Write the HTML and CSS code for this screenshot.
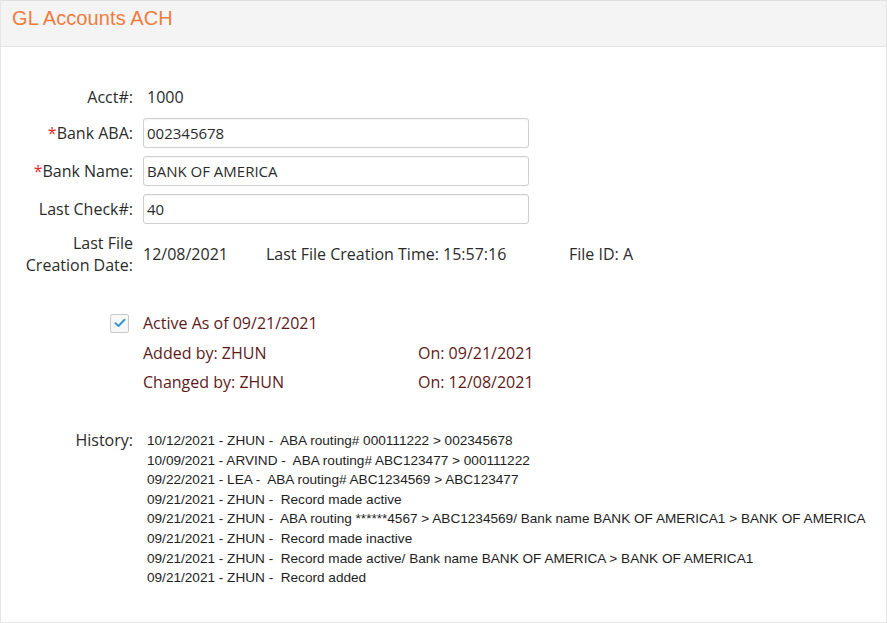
FILE: index.html
```html
<!DOCTYPE html>
<html>
<head>
<meta charset="utf-8">
<link rel="stylesheet" href="styles.css">
</head>
<body>
<div class="panel">
  <div class="panel-head"><h1 class="title">GL Accounts ACH</h1></div>
  <div class="panel-body">
    <div class="form">
      <div class="row row-static">
        <div class="label">Acct#:</div>
        <div class="value">1000</div>
      </div>
      <div class="row">
        <div class="label"><span class="req">*</span>Bank ABA:</div>
        <input class="field" type="text" value="002345678">
      </div>
      <div class="row">
        <div class="label"><span class="req">*</span>Bank Name:</div>
        <input class="field" type="text" value="BANK OF AMERICA">
      </div>
      <div class="row">
        <div class="label">Last Check#:</div>
        <input class="field" type="text" value="40">
      </div>
      <div class="row row-file">
        <div class="label label-2line">Last File<br>Creation Date:</div>
        <div class="file-info">
          <span class="v-date">12/08/2021</span>
          <span class="v-time">Last File Creation Time: 15:57:16</span>
          <span class="v-id">File ID: A</span>
        </div>
      </div>
    </div>

    <div class="status">
      <div class="active-line">
        <span class="checkbox">
          <svg width="12" height="10" viewBox="0 0 12 10"><path d="M1.5 5.2 L4.5 8 L10.5 1.8" fill="none" stroke="#3a98d6" stroke-width="2" stroke-linecap="round" stroke-linejoin="round"/></svg>
        </span>
        <span class="active-text">Active As of 09/21/2021</span>
      </div>
      <div class="audit">
        <span class="who">Added by: ZHUN</span><span class="when">On: 09/21/2021</span>
      </div>
      <div class="audit">
        <span class="who">Changed by: ZHUN</span><span class="when">On: 12/08/2021</span>
      </div>
    </div>

    <div class="history">
      <div class="label history-label">History:</div>
      <div class="history-list">
        <div>10/12/2021 - ZHUN -&nbsp; ABA routing# 000111222 &gt; 002345678</div>
        <div>10/09/2021 - ARVIND -&nbsp; ABA routing# ABC123477 &gt; 000111222</div>
        <div>09/22/2021 - LEA -&nbsp; ABA routing# ABC1234569 &gt; ABC123477</div>
        <div>09/21/2021 - ZHUN -&nbsp; Record made active</div>
        <div>09/21/2021 - ZHUN -&nbsp; ABA routing ******4567 &gt; ABC1234569/ Bank name BANK OF AMERICA1 &gt; BANK OF AMERICA</div>
        <div>09/21/2021 - ZHUN -&nbsp; Record made inactive</div>
        <div>09/21/2021 - ZHUN -&nbsp; Record made active/ Bank name BANK OF AMERICA &gt; BANK OF AMERICA1</div>
        <div>09/21/2021 - ZHUN -&nbsp; Record added</div>
      </div>
    </div>
  </div>
</div>
</body>
</html>
```
FILE: styles.css
```css
html, body {
  margin: 0;
  padding: 0;
  background: #ffffff;
}
body {
  font-family: "Open Sans", "Liberation Sans", sans-serif;
  color: #2b2b2b;
  font-size: 16px;
}
.panel {
  box-sizing: border-box;
  width: 887px;
  height: 623px;
  border: 1px solid #e6e6e6;
  border-top-color: #e0e0e0;
}
.panel-head {
  background: #f4f4f4;
  height: 45px;
  border-bottom: 1px solid #e3e3e3;
  display: flex;
  align-items: flex-start;
  padding-left: 11px;
}
.title {
  margin: 0;
  padding-top: 6px;
  font-family: "Liberation Sans", Arial, sans-serif;
  font-weight: normal;
  font-size: 20px;
  color: #f07b3f;
  letter-spacing: 0.1px;
}
.panel-body {
  padding-top: 37px;
}
.form {
  display: flex;
  flex-direction: column;
  gap: 8px;
}
.row {
  display: grid;
  grid-template-columns: 132px 386px;
  column-gap: 10px;
  align-items: center;
  height: 30px;
}
.row-static {
  height: 26px;
}
.row-file {
  height: 44px;
}
.label {
  text-align: right;
  color: #2b2b2b;
  white-space: nowrap;
}
.label-2line {
  line-height: 22px;
}
.req {
  color: #e8262a;
}
.value {
  padding-left: 4px;
}
.field {
  box-sizing: border-box;
  height: 30px;
  width: 386px;
  margin: 0;
  border: 1px solid #cfcfcf;
  border-radius: 3px;
  padding: 0 3px;
  font-family: "Open Sans", "Liberation Sans", sans-serif;
  font-size: 15px;
  color: #2b2b2b;
  background: #ffffff;
  box-shadow: inset 0 1px 1px rgba(0,0,0,0.04);
}
.file-info {
  display: flex;
  white-space: nowrap;
}
.v-date { flex: none; width: 123px; }
.v-time { flex: none; width: 303px; }
.v-id { flex: none; }
.status {
  margin-top: 37px;
  padding-left: 109px;
  color: #5e1a1a;
}
.active-line {
  display: flex;
  align-items: center;
  height: 20px;
}
.checkbox {
  box-sizing: border-box;
  width: 19px;
  height: 19px;
  border: 1px solid #c9c9c9;
  border-radius: 2px;
  background: #f7f7f7;
  display: flex;
  align-items: center;
  justify-content: center;
  margin-right: 14px;
}
.audit {
  display: flex;
  padding-left: 33px;
  margin-top: 10px;
  height: 20px;
  align-items: center;
}
.audit + .audit {
  margin-top: 9px;
}
.who { width: 275px; }
.history {
  display: flex;
  margin-top: 39px;
}
.history-label {
  width: 132px;
  flex: none;
  line-height: 19.6px;
}
.history-list {
  padding-left: 14px;
  font-family: "Liberation Sans", Arial, sans-serif;
  font-size: 13.6px;
  line-height: 19.6px;
  color: #1e1e1e;
  white-space: nowrap;
}
```
